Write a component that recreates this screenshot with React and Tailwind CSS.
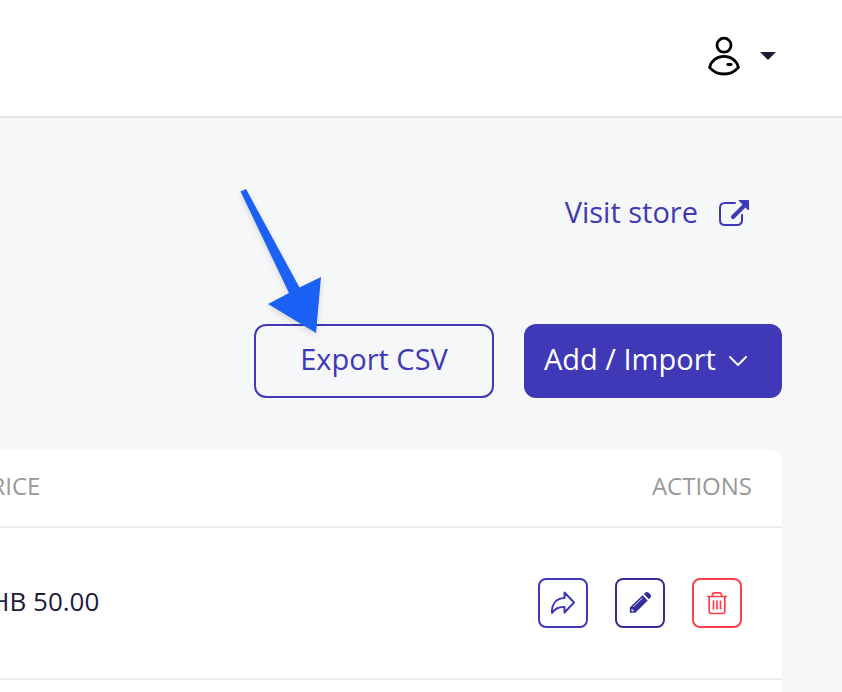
const rows = [{ id: 1, price: 'THB 50.00' }]

function UserIcon() {
  return (
    <svg className="w-8 h-10" viewBox="0 0 32 40" fill="none" stroke="#000" strokeWidth="2.8" strokeLinecap="round" strokeLinejoin="round">
      <circle cx="16" cy="9.2" r="7" />
      <path d="M1.6 31.3C3.2 24.5 9 20.4 16 20.4S28.8 24.5 30.4 31.3C27 35.5 22 38 16 38S5 35.5 1.6 31.3Z" />
      <path d="M19.8 28.5H23" />
    </svg>
  )
}

function ExternalIcon() {
  return (
    <svg className="w-8 h-8" viewBox="0 0 32 32" fill="none">
      <path d="M17 7H7Q2 7 2 12V24Q2 29 7 29H19Q24 29 24 24V19" stroke="currentColor" strokeWidth="2" strokeLinecap="round" />
      <path d="M15 21L26 10" stroke="currentColor" strokeWidth="4" strokeLinecap="round" />
      <path d="M21 4.500H30.500V14Z" fill="currentColor" stroke="currentColor" strokeLinejoin="round" />
    </svg>
  )
}

function ShareIcon() {
  return (
    <svg className="w-6 h-6" viewBox="0 0 24 24" fill="none" stroke="currentColor" strokeWidth="2" strokeLinejoin="round">
      <path d="M13.500 1.500L23 11.500L13.500 21.500V16C8 15.600 4 17.500 1 22C0.500 13 5 7.500 13.500 7Z" />
    </svg>
  )
}

function PencilIcon() {
  return (
    <svg className="w-6 h-6" viewBox="0 0 24 24" fill="currentColor">
      <path d="M14.600 4.300L19.700 9.400L7.400 21.700H1.800V16.600Z" />
      <path d="M15.800 3.100L17.400 1.500Q18.900 0.300 20.400 1.500L22.500 3.600Q23.700 5.100 22.500 6.600L20.900 8.200Z" />
      <path d="M5.500 15.800L14.300 7" stroke="#fff" fill="none" strokeWidth="0.900" />
      <path d="M3.300 18.400H5.300V20.600H4.500L3.300 19.500Z" fill="#fff" />
    </svg>
  )
}

function TrashIcon() {
  return (
    <svg className="w-6 h-6" viewBox="0 0 24 24" fill="none" stroke="currentColor" strokeWidth="1.700">
      <path d="M2 5.500H22M7.500 5V3.500Q7.500 1.800 9.200 1.800H14.800Q16.500 1.800 16.500 3.500V5" />
      <path d="M4.200 6V20.300Q4.200 22.500 6.400 22.500H17.600Q19.800 22.500 19.800 20.300V6M8.500 9.500V18.500M12 9.500V18.500M15.500 9.500V18.500" />
    </svg>
  )
}

export default function App() {
  return (
    <div className="relative flex min-h-screen flex-col overflow-hidden bg-[#f5f7f9] font-['Open_Sans',sans-serif]">
      <header className="flex justify-end border-b-2 border-[#e0e2e6] bg-white pt-9 pb-10 pr-16">
        <button aria-label="Account" className="flex items-center gap-5 pr-0.5">
          <UserIcon />
          <svg className="w-4 h-2" viewBox="0 0 16 8" fill="#211b3a"><path d="M0 0H16L8 8Z" /></svg>
        </button>
      </header>

      <main className="flex flex-1 flex-col pt-19 pr-15">
        <div className="flex justify-end pr-8">
          <a href="#store" className="flex items-center gap-5 text-[29px] leading-9 text-[#3f38b7]">
            Visit store
            <ExternalIcon />
          </a>
        </div>

        <div className="mt-[94px] flex justify-end gap-[30px]">
          <button className="h-[74px] w-60 rounded-xl border-2 border-[#3f38b7] pb-1 text-[29px] text-[#3f38b7]">Export CSV</button>
          <button className="flex h-[74px] w-[258px] items-center gap-3 rounded-xl bg-[#3f38b7] pb-1 pl-5 text-[29px] text-white">
            Add / Import
            <svg className="mt-1 w-5 h-5" viewBox="0 0 20 20" fill="none" stroke="currentColor" strokeWidth="2" strokeLinecap="round" strokeLinejoin="round">
              <path d="M2 6L10 14L18 6" />
            </svg>
          </button>
        </div>

        <div className="mt-13 -ml-15 flex-1 rounded-t-xl bg-white">
          <table className="w-full">
            <thead>
              <tr className="h-[77px] border-b-2 border-[#ececec] text-[24px] text-[#999]">
                <th className="pb-1 pl-9 text-left font-normal">PRICE</th>
                <th className="pb-1 pr-[30px] text-right font-normal">ACTIONS</th>
              </tr>
            </thead>
            <tbody>
              {rows.map((row) => (
                <tr key={row.id} className="h-[152px] border-b-2 border-[#ececec]">
                  <td className="pb-1 pl-9 text-[26px] text-[#211b3a]">{row.price}</td>
                  <td className="pr-10">
                    <div className="flex justify-end gap-[27px]">
                      <button aria-label="Share" className="flex h-[50px] w-[50px] items-center justify-center rounded-lg border-2 border-[#3f38b7] text-[#3f38b7]"><ShareIcon /></button>
                      <button aria-label="Edit" className="flex h-[50px] w-[50px] items-center justify-center rounded-lg border-2 border-[#352d9b] text-[#352d9b]"><PencilIcon /></button>
                      <button aria-label="Delete" className="flex h-[50px] w-[50px] items-center justify-center rounded-lg border-2 border-[#fb3f4c] text-[#fb3f4c]"><TrashIcon /></button>
                    </div>
                  </td>
                </tr>
              ))}
            </tbody>
          </table>
        </div>
      </main>

      {/* pointer to the export button */}
      <svg className="pointer-events-none absolute top-[180px] right-[512px] h-40 w-25 drop-shadow-md" viewBox="0 0 100 160" fill="#1b61f5">
        <path d="M10.500 11.500L16 9L69.500 107.500L91 97L86 153L38 124L59 113Z" />
      </svg>
    </div>
  )
}
